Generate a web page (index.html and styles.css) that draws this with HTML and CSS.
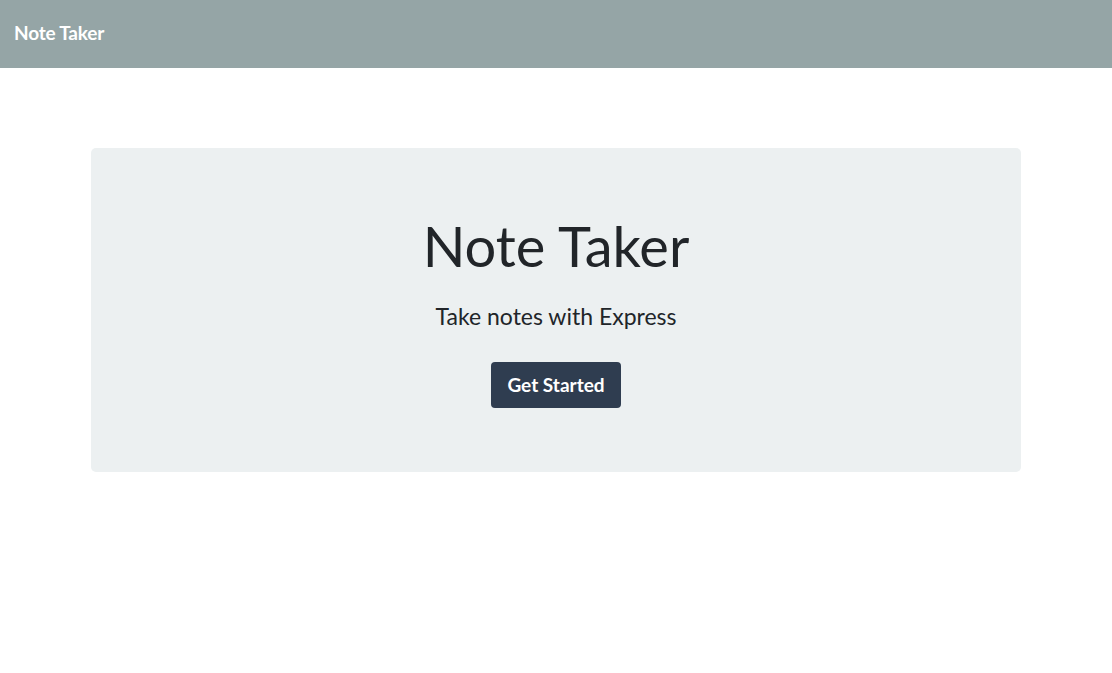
FILE: index.html
```html
<!DOCTYPE html>
<html lang="en">
<head>
<meta charset="utf-8">
<title>Note Taker</title>
<link rel="stylesheet" href="styles.css">
</head>
<body>
<nav class="navbar">
  <a class="brand" href="#">Note Taker</a>
</nav>
<main class="container">
  <section class="jumbotron">
    <h1 class="title">Note Taker</h1>
    <p class="lead">Take notes with Express</p>
    <a class="btn" href="#">Get Started</a>
  </section>
</main>
</body>
</html>
```
FILE: styles.css
```css
html, body {
  margin: 0;
  padding: 0;
  background: #ffffff;
  font-family: Lato, "Open Sans", "Liberation Sans", sans-serif;
  color: #212529;
}

.navbar {
  height: 68px;
  background: #95a5a6;
  display: flex;
  align-items: center;
  padding: 0 14px 4px;
  box-sizing: border-box;
}

.brand {
  color: #ffffff;
  text-decoration: none;
  font-size: 19px;
  font-weight: 700;
  letter-spacing: -0.2px;
}

.container {
  width: 930px;
  margin: 80px auto 0;
}

.jumbotron {
  background: #ecf0f1;
  border-radius: 5px;
  padding: 64px 32px;
  text-align: center;
}

.title {
  margin: 0 0 24px;
  font-size: 56px;
  font-weight: 400;
  line-height: 1.2;
}

.lead {
  margin: 0 0 31px;
  font-size: 23px;
  line-height: 1.2;
}

.btn {
  display: inline-block;
  background: #2f3d50;
  color: #ffffff;
  text-decoration: none;
  font-size: 19px;
  font-weight: 700;
  line-height: 30px;
  padding: 8px 16px;
  border-radius: 4px;
}
```
